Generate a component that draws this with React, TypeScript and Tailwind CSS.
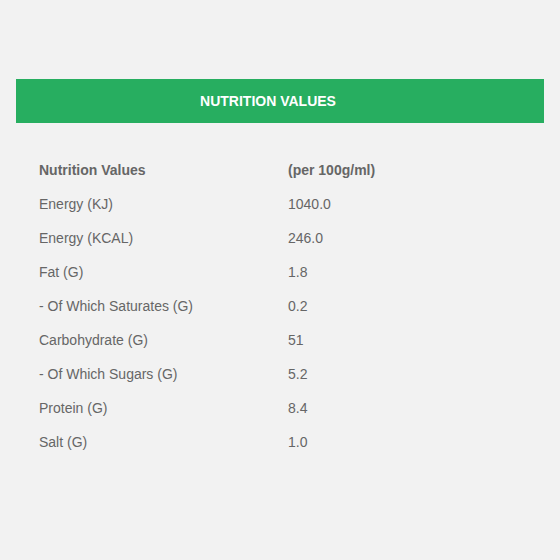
export default function App() {
  const rows: [string, string][] = [
    ["Energy (KJ)", "1040.0"],
    ["Energy (KCAL)", "246.0"],
    ["Fat (G)", "1.8"],
    ["- Of Which Saturates (G)", "0.2"],
    ["Carbohydrate (G)", "51"],
    ["- Of Which Sugars (G)", "5.2"],
    ["Protein (G)", "8.4"],
    ["Salt (G)", "1.0"],
  ];
  return (
    <div
      className="w-[560px] h-[560px] bg-[#f2f2f2] pt-[79px] pl-[16px] pr-[16px]"
      style={{ fontFamily: '"Liberation Sans", Arial, sans-serif' }}
    >
      <div className="h-[44px] bg-[#27ae60] flex items-center justify-center pr-[24px] text-white font-bold text-[14px]">
        NUTRITION VALUES
      </div>
      <div className="pt-[30px] pl-[23px] text-[14px] text-[#666]">
        <div className="flex h-[34px] items-center font-bold">
          <div className="w-[249px]">Nutrition Values</div>
          <div>(per 100g/ml)</div>
        </div>
        {rows.map(([l, v]) => (
          <div key={l} className="flex h-[34px] items-center">
            <div className="w-[249px]">{l}</div>
            <div>{v}</div>
          </div>
        ))}
      </div>
    </div>
  );
}
